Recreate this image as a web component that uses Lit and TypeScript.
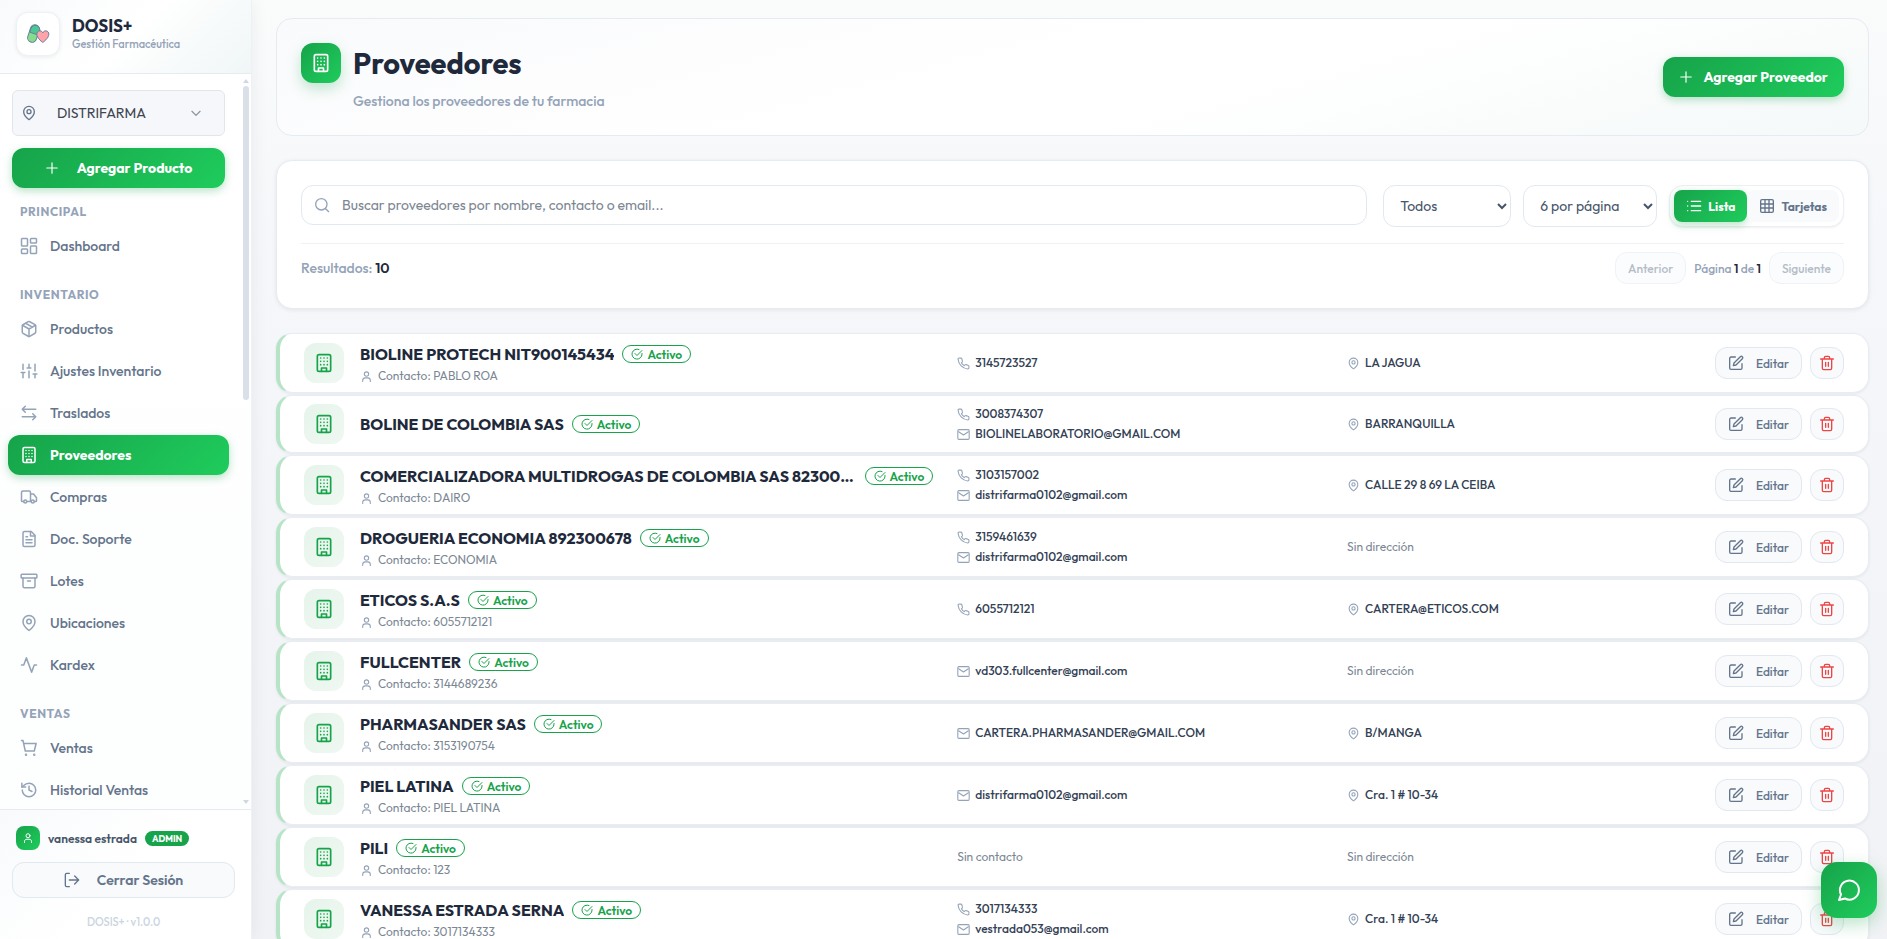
import { LitElement, html, css, svg } from "lit";
import { customElement, state } from "lit/decorators.js";
import { classMap } from "lit/directives/class-map.js";

const dots = (xs: number[], ys: number[]) =>
  xs.flatMap((x) => ys.map((y) => svg`<path d="M${x} ${y}h.01"/>`));

const ICONS: Record<string, any> = {
  pin: svg`<path d="M20 10c0 6-8 12-8 12s-8-6-8-12a8 8 0 0 1 16 0Z"/><circle cx="12" cy="10" r="3"/>`,
  chevron: svg`<path d="m5 9 7 7 7-7"/>`,
  plus: svg`<path d="M12 3v18M3 12h18"/>`,
  dashboard: svg`<rect x="2" y="2" width="8" height="10" rx="1"/><rect x="14" y="2" width="8" height="6" rx="1"/><rect x="14" y="12" width="8" height="10" rx="1"/><rect x="2" y="16" width="8" height="6" rx="1"/>`,
  box: svg`<path d="M21 16V8a2 2 0 0 0-1-1.7l-7-4a2 2 0 0 0-2 0l-7 4A2 2 0 0 0 3 8v8a2 2 0 0 0 1 1.7l7 4a2 2 0 0 0 2 0l7-4a2 2 0 0 0 1-1.7Z"/><path d="m3.3 7 8.7 5 8.7-5M12 22V12M7.5 4.3l9 5.1"/>`,
  sliders: svg`<path d="M4 21v-7M4 10V3M12 21v-9M12 8V3M20 21v-5M20 12V3M1.500 14h5M9.500 8h5M17.500 16h5"/>`,
  swap: svg`<path d="M21 7H3M7 3 3 7l4 4M3 17h18M17 13l4 4-4 4"/>`,
  building: svg`<rect x="4" y="2" width="16" height="20" rx="2"/><path d="M9 22v-4h6v4"/>${dots([8, 12, 16], [6, 10, 14])}`,
  truck: svg`<path d="M14 18V6a2 2 0 0 0-2-2H4a2 2 0 0 0-2 2v11a1 1 0 0 0 1 1h2M9 18h6M14 8h4l4 5v4a1 1 0 0 1-1 1h-2"/><circle cx="7" cy="18" r="2"/><circle cx="17" cy="18" r="2"/>`,
  doc: svg`<path d="M15 2H6a2 2 0 0 0-2 2v16a2 2 0 0 0 2 2h12a2 2 0 0 0 2-2V7l-5-5Z"/><path d="M14 2v6h6M8 9h2M8 13h8M8 17h8"/>`,
  archive: svg`<rect x="1.500" y="3" width="21" height="5" rx="1"/><path d="M4 8v11a2 2 0 0 0 2 2h12a2 2 0 0 0 2-2V8M10 12h4"/>`,
  activity: svg`<path d="M22 12h-3l-3.500 9.500L8.500 2.500 5 12H2"/>`,
  cart: svg`<circle cx="8" cy="21" r=".7"/><circle cx="19" cy="21" r=".7"/><path d="M2 2h2l3 14h12l2.500-10H5"/>`,
  history: svg`<path d="M3 12a9 9 0 1 0 9-9 10 10 0 0 0-7 3L2.500 8"/><path d="M2.500 3v5h5M12 7v5l4 2"/>`,
  user: svg`<circle cx="12" cy="7.500" r="4"/><path d="M5 21v-2c0-3 2-4.500 5-4.500h4c3 0 5 1.500 5 4.500v2"/>`,
  logout: svg`<path d="M8 22H4a2 2 0 0 1-2-2V4a2 2 0 0 1 2-2h4M8 12h14M16 6l6 6-6 6"/>`,
  search: svg`<circle cx="11" cy="11" r="8.500"/><path d="m17.500 17.500 4.500 4.500"/>`,
  list: svg`<path d="M8 5h14M8 12h14M8 19h14M2.500 5h.01M2.500 12h.01M2.500 19h.01"/>`,
  grid: svg`<rect x="2.500" y="2.500" width="19" height="19" rx="2"/><path d="M9 3v18M15 3v18M3 9h18M3 15h18"/>`,
  check: svg`<path d="M22 11v1a10 10 0 1 1-6-9"/><path d="m8 11 4 4L22 5"/>`,
  phone: svg`<path d="M22 17v3a2 2 0 0 1-2.200 2A19.800 19.800 0 0 1 2 4.200 2 2 0 0 1 4 2h3a2 2 0 0 1 2 1.700l1 3.600a2 2 0 0 1-.5 2.100L8.100 10.700a16 16 0 0 0 5.200 5.200l1.300-1.300a2 2 0 0 1 2.100-.5l3.600 1A2 2 0 0 1 22 17Z"/>`,
  mail: svg`<rect x="1.500" y="3" width="21" height="18" rx="2"/><path d="m3 7 9 6 9-6"/>`,
  edit: svg`<path d="M11 3H4.500a2 2 0 0 0-2 2v14.500a2 2 0 0 0 2 2H19a2 2 0 0 0 2-2V13"/><path d="M18.500 2.500a2.100 2.100 0 0 1 3 3L12 15l-4 1 1-4 9.500-9.500Z"/>`,
  trash: svg`<path d="M2.500 6h19M19 6v14a2 2 0 0 1-2 2H7a2 2 0 0 1-2-2V6M8 6V4a2 2 0 0 1 2-2h4a2 2 0 0 1 2 2v2M10 11v6M14 11v6"/>`,
  chat: svg`<path d="M8 20.500A9.500 9.500 0 1 0 4 16.500L2 22Z"/>`,
};

const icon = (name: string, cls = "") =>
  html`<svg class="icon ${cls}" viewBox="0 0 24 24" aria-hidden="true">${ICONS[name]}</svg>`;

const NAV = [
  { title: "Principal", items: [["dashboard", "Dashboard"]] },
  {
    title: "Inventario",
    items: [
      ["box", "Productos"],
      ["sliders", "Ajustes Inventario"],
      ["swap", "Traslados"],
      ["building", "Proveedores"],
      ["truck", "Compras"],
      ["doc", "Doc. Soporte"],
      ["archive", "Lotes"],
      ["pin", "Ubicaciones"],
      ["activity", "Kardex"],
    ],
  },
  { title: "Ventas", items: [["cart", "Ventas"], ["history", "Historial Ventas"]] },
];

interface Supplier {
  name: string;
  contact?: string;
  phone?: string;
  email?: string;
  address?: string;
}

const SUPPLIERS: Supplier[] = [
  { name: "BIOLINE PROTECH NIT900145434", contact: "PABLO ROA", phone: "3145723527", address: "LA JAGUA" },
  { name: "BOLINE DE COLOMBIA SAS", phone: "3008374307", email: "BIOLINELABORATORIO@GMAIL.COM", address: "BARRANQUILLA" },
  { name: "COMERCIALIZADORA MULTIDROGAS DE COLOMBIA SAS 823002800", contact: "DAIRO", phone: "3103157002", email: "distrifarma0102@gmail.com", address: "CALLE 29 8 69 LA CEIBA" },
  { name: "DROGUERIA ECONOMIA 892300678", contact: "ECONOMIA", phone: "3159461639", email: "distrifarma0102@gmail.com" },
  { name: "ETICOS S.A.S", contact: "6055712121", phone: "6055712121", address: "CARTERA@ETICOS.COM" },
  { name: "FULLCENTER", contact: "3144689236", email: "vd303.fullcenter@gmail.com" },
  { name: "PHARMASANDER SAS", contact: "3153190754", email: "CARTERA.PHARMASANDER@GMAIL.COM", address: "B/MANGA" },
  { name: "PIEL LATINA", contact: "PIEL LATINA", email: "distrifarma0102@gmail.com", address: "Cra. 1 # 10-34" },
  { name: "PILI", contact: "123" },
  { name: "VANESSA ESTRADA SERNA", contact: "3017134333", phone: "3017134333", email: "vestrada053@gmail.com", address: "Cra. 1 # 10-34" },
];

const shared = css`
  :host, * { box-sizing: border-box; }
  :host { font-family: Outfit, Lato, sans-serif; color: #1e293b; }
  button, input, select { font: inherit; color: inherit; margin: 0; }
  button { cursor: pointer; display: inline-flex; align-items: center; justify-content: center; border: 0; white-space: nowrap; }
  h1, h2, p, ul { margin: 0; padding: 0; }
  ul { list-style: none; }
  .icon {
    width: 16px; height: 16px; flex: none; fill: none; stroke: currentColor;
    stroke-width: 2; stroke-linecap: round; stroke-linejoin: round; overflow: visible;
  }
  .xs { width: 12px; height: 12px; }
  .sm { width: 13px; height: 13px; }
  .md { width: 14px; height: 14px; }
  .lg { width: 18px; height: 18px; }
  .xl { width: 20px; height: 20px; }
  .primary {
    background: linear-gradient(135deg, #16a34a, #1fcc5c);
    color: #fff;
    border-radius: 12px;
    font-weight: 700;
    box-shadow: 0 3px 8px rgba(22, 163, 74, 0.3);
  }
`;

@customElement("app-sidebar")
class AppSidebar extends LitElement {
  static styles = [
    shared,
    css`
      :host { display: flex; flex-direction: column; width: 252px; height: 100vh; flex: none; background: linear-gradient(#fff, #fdfefe); border-right: 1px solid #eef1f5; box-shadow: 2px 0 16px rgba(15, 23, 42, 0.05); position: relative; }
      .brand { display: flex; align-items: center; gap: 12px; padding: 12px 16px 17px; height: 74px; border-bottom: 1px solid #e6ebf1; background: linear-gradient(135deg, #f8fafc, #fff 50%, #f0f6f6); }
      .logo { width: 44px; height: 44px; border: 1px solid #eef2f6; border-radius: 12px; background: #fff; box-shadow: 0 1px 4px rgba(15, 23, 42, 0.08); display: grid; place-items: center; }
      .logo svg { width: 24px; height: 24px; }
      .brand-name { font-size: 17px; line-height: 20px; font-weight: 700; }
      .brand-sub { font-size: 11px; line-height: 16px; color: #94a3b8; font-weight: 500; }
      .body { display: flex; flex: 1; min-height: 0; overflow: hidden; }
      nav { flex: 1; min-width: 0; padding: 16px 8px 0; }
      .controls { display: flex; flex-direction: column; gap: 12px; padding: 0 4px; }
      .branch { display: flex; align-items: center; height: 46px; width: 100%; padding: 0 21px 0 8px; background: #f6f7fa; border: 1px solid #e2e6eb; border-radius: 6px; color: #3f4651; font-size: 14px; justify-content: flex-start; }
      .branch .pin { color: #64748b; }
      .branch span { flex: 1; text-align: left; padding-left: 20px; }
      .branch .chev { color: #8a929c; width: 14px; height: 14px; }
      .add { height: 40px; width: 100%; gap: 18px; font-size: 14px; }
      .title { font-size: 12px; line-height: 16px; font-weight: 700; color: #94a3b8; letter-spacing: 0.05em; text-transform: uppercase; margin: 21px 12px 6px; }
      .group:first-of-type .title { margin-top: 16px; }
      ul { display: flex; flex-direction: column; gap: 2px; }
      a { display: flex; align-items: center; gap: 12px; height: 40px; padding: 0 12px; color: #64748b; text-decoration: none; font-size: 14px; font-weight: 500; border-radius: 12px; }
      a .icon { color: #94a3b8; }
      a.primary { color: #fff; font-weight: 700; }
      a.primary .icon { color: #fff; }
      .track { width: 14px; display: flex; flex-direction: column; align-items: center; justify-content: space-between; padding: 5px 0 5px 4px; }
      .arrow { border: 3px solid transparent; }
      .up { border-top: 0; border-bottom: 4px solid #cfd8e2; }
      .down { border-bottom: 0; border-top: 4px solid #cfd8e2; }
      .rail { flex: 1; width: 6px; padding-top: 3px; }
      .thumb { height: 44%; border-radius: 3px; background: #d9e0e8; }
      footer { border-top: 1px solid #e6ebf1; padding: 16px 16px 0 12px; height: 130px; background: linear-gradient(135deg, #f8fafc, #fff 50%); }
      .user { display: flex; align-items: center; gap: 8px; padding-left: 4px; font-size: 12px; font-weight: 600; color: #475569; }
      .avatar { width: 24px; height: 24px; border-radius: 8px; background: linear-gradient(135deg, #16a34a, #1fcc5c); color: #fff; display: grid; place-items: center; }
      .badge { background: #16a34a; color: #fff; font-size: 9px; line-height: 15px; border-radius: 8px; padding: 0 7px; font-weight: 700; }
      .logout { margin-top: 12px; width: 100%; height: 36px; gap: 17px; background: #f8fafc; border: 1px solid #e2e8f0; border-radius: 12px; color: #64748b; font-size: 14px; font-weight: 600; }
      .version { text-align: center; font-size: 11px; line-height: 16px; margin-top: 16px; color: #cbd5e1; font-weight: 500; }
    `,
  ];

  render() {
    return html`
      <div class="brand">
        <div class="logo">
          <svg viewBox="0 0 24 24" aria-hidden="true">
            <g stroke="#64809a" stroke-width="1">
              <rect x="3" y="2.500" width="9" height="18" rx="4.500" transform="rotate(18 7.500 11.500)" fill="#86dc8c"/>
              <path d="M3.800 10.200 5 6.500a4.500 4.500 0 0 1 8.600 2.800l-1.200 3.700Z" fill="#4bc795"/>
              <path d="M16.800 20.500s-6-4.200-6-8.300c0-3.800 4.500-4.500 6-1.400 1.500-3.100 6-2.400 6 1.400 0 4.100-6 8.300-6 8.300Z" fill="#ffa3ab"/>
            </g>
          </svg>
        </div>
        <div>
          <div class="brand-name">DOSIS+</div>
          <div class="brand-sub">Gestión Farmacéutica</div>
        </div>
      </div>
      <div class="body">
        <nav>
          <div class="controls">
            <button class="branch">${icon("pin", "pin")}<span>DISTRIFARMA</span>${icon("chevron", "chev")}</button>
            <button class="primary add">${icon("plus", "md")}Agregar Producto</button>
          </div>
          ${NAV.map((g) => html`
            <section class="group">
              <h2 class="title">${g.title}</h2>
              <ul>
                ${g.items.map(([ic, label]) => html`
                  <li><a href="#" class=${classMap({ primary: label === "Proveedores" })}>${icon(ic, "lg")}${label}</a></li>
                `)}
              </ul>
            </section>
          `)}
        </nav>
        <div class="track" aria-hidden="true">
          <div class="arrow up"></div>
          <div class="rail"><div class="thumb"></div></div>
          <div class="arrow down"></div>
        </div>
      </div>
      <footer>
        <div class="user"><span class="avatar">${icon("user", "xs")}</span>vanessa estrada<span class="badge">ADMIN</span></div>
        <button class="logout">${icon("logout")}Cerrar Sesión</button>
        <p class="version">DOSIS+ · v1.0.0</p>
      </footer>
    `;
  }
}

@customElement("supplier-row")
class SupplierRow extends LitElement {
  static properties = { supplier: { attribute: false } };
  declare supplier: Supplier;

  static styles = [
    shared,
    css`
      :host { display: grid; grid-template-columns: minmax(0, 172fr) minmax(0, 100fr) minmax(0, 94fr) auto; column-gap: 24px; align-items: center; padding: 8px 24px; background: #fff; border: 1px solid #e8edf3; border-left: 4px solid #b7e4c7; border-radius: 16px; box-shadow: 0 1px 3px rgba(15, 23, 42, 0.07); }
      .info { display: flex; align-items: center; gap: 16px; }
      .tile { width: 40px; height: 40px; flex: none; border-radius: 12px; background: linear-gradient(135deg, #e6f4eb, #eff8f2); color: #16a34a; display: grid; place-items: center; }
      .text { min-width: 0; }
      .head { display: flex; align-items: center; gap: 8px; height: 24px; }
      .name { font-size: 16px; line-height: 24px; font-weight: 700; white-space: nowrap; overflow: hidden; text-overflow: ellipsis; }
      .status { display: flex; align-items: center; gap: 4px; flex: none; height: 18px; padding: 0 8px; border: 1px solid #16a34a; border-radius: 9px; color: #16a34a; font-size: 12px; font-weight: 600; }
      .line { display: flex; align-items: center; gap: 5px; font-size: 12px; line-height: 20px; font-weight: 500; color: #334155; }
      .line .icon { color: #94a3b8; }
      .contact { line-height: 16px; padding-top: 2px; color: #7b8794; font-weight: 400; }
      .empty { color: #7b8794; font-weight: 400; }
      .actions { display: flex; gap: 8px; }
      .actions button { height: 32px; border: 1px solid #e2e8f0; border-radius: 12px; background: #f8fafc; color: #64748b; font-size: 12px; font-weight: 500; }
      .actions .edit { width: 87px; gap: 12px; }
      .actions .del { width: 34px; color: #ef4444; }
    `,
  ];

  render() {
    const s = this.supplier;
    return html`
      <div class="info">
        <span class="tile">${icon("building", "xl")}</span>
        <div class="text">
          <div class="head">
            <span class="name">${s.name}</span>
            <span class="status">${icon("check", "xs")}Activo</span>
          </div>
          ${s.contact ? html`<div class="line contact">${icon("user", "sm")}Contacto: ${s.contact}</div>` : ""}
        </div>
      </div>
      <div>
        ${s.phone ? html`<div class="line">${icon("phone", "sm")}${s.phone}</div>` : ""}
        ${s.email ? html`<div class="line">${icon("mail", "sm")}${s.email}</div>` : ""}
        ${!s.phone && !s.email ? html`<div class="line empty">Sin contacto</div>` : ""}
      </div>
      ${s.address
        ? html`<div class="line">${icon("pin", "sm")}${s.address}</div>`
        : html`<div class="line empty">Sin dirección</div>`}
      <div class="actions">
        <button class="edit">${icon("edit")}Editar</button>
        <button class="del" aria-label="Eliminar">${icon("trash")}</button>
      </div>
    `;
  }
}

@customElement("app-root")
class AppRoot extends LitElement {
  @state() view = "lista";

  static styles = [
    shared,
    css`
      :host { display: flex; height: 100vh; overflow: hidden; background: linear-gradient(#fafbfb, #f6f7fa 25%, #f1f2f5); }
      main { flex: 1; min-width: 0; padding: 18px 18px 0 24px; display: flex; flex-direction: column; gap: 24px; overflow: hidden; }
      .card { flex: none; background: #fff; border: 1px solid #e6ebf2; border-radius: 16px; padding: 24px; }
      .hero { display: flex; align-items: center; justify-content: space-between; background: linear-gradient(165deg, #f9fafc, #fff 45%, #fff 60%, #f5f9f9); }
      .heading { display: flex; align-items: flex-start; gap: 12px; }
      .badge { width: 40px; height: 40px; display: grid; place-items: center; box-shadow: 0 6px 14px rgba(22, 163, 74, 0.25); }
      h1 { font-size: 29px; line-height: 42px; font-weight: 700; }
      .sub { font-size: 14px; line-height: 20px; margin-top: 6px; color: #94a3b8; font-weight: 500; }
      .new { height: 40px; padding: 0 16px; gap: 10px; font-size: 14px; }
      .filters { box-shadow: 0 1px 4px rgba(15, 23, 42, 0.08); }
      .bar { display: flex; align-items: flex-start; gap: 12px; padding-bottom: 16px; border-bottom: 1px solid #eff2f5; }
      .search { flex: 1; display: flex; align-items: center; gap: 12px; height: 40px; padding: 0 12px; margin-right: 4px; border: 1px solid #e2e8f0; border-radius: 12px; color: #94a3b8; }
      .search input { flex: 1; border: 0; outline: 0; background: none; padding: 0; font-size: 14px; color: #475569; }
      .search input::placeholder { color: #7d8793; }
      select { height: 42px; border: 1px solid #e2e8f0; border-radius: 12px; background: #fff; color: #475569; font-size: 14px; padding: 0 0 0 12px; }
      .state { width: 128px; }
      .size { width: 134px; }
      .toggle { display: flex; padding: 4px; height: 42px; border: 1px solid #eceff4; border-radius: 14px; background: #fff; box-shadow: 0 1px 2px rgba(15, 23, 42, 0.06); }
      .toggle button { height: 32px; gap: 6px; padding: 0 12px; border-radius: 8px; background: #f8fafc; color: #64748b; font-size: 12px; font-weight: 700; }
      .toggle .primary { background: linear-gradient(135deg, #16a34a, #1fcc5c); color: #fff; }
      .foot { display: flex; align-items: center; justify-content: space-between; padding-top: 8px; font-size: 14px; color: #94a3b8; font-weight: 500; }
      .foot b { color: #1e293b; font-weight: 600; }
      .pager { display: flex; align-items: center; gap: 8px; font-size: 12px; }
      .pager button { height: 32px; padding: 0 12px; border: 1px solid #eff2f6; border-radius: 12px; background: #fbfcfd; color: #b4bcc8; font-size: 12px; font-weight: 500; }
      .rows { display: flex; flex-direction: column; gap: 2px; }
      .chat { position: fixed; right: 10px; bottom: 21px; width: 56px; height: 56px; border-radius: 16px; box-shadow: 0 6px 18px rgba(22, 163, 74, 0.3); }
      .chat .icon { width: 24px; height: 24px; }
    `,
  ];

  render() {
    return html`
      <app-sidebar></app-sidebar>
      <main>
        <header class="card hero">
          <div class="heading">
            <span class="primary badge">${icon("building", "xl")}</span>
            <div>
              <h1>Proveedores</h1>
              <p class="sub">Gestiona los proveedores de tu farmacia</p>
            </div>
          </div>
          <button class="primary new">${icon("plus", "md")}Agregar Proveedor</button>
        </header>
        <section class="card filters">
          <div class="bar">
            <label class="search">${icon("search")}<input type="search" aria-label="Buscar" placeholder="Buscar proveedores por nombre, contacto o email..." /></label>
            <select class="state" aria-label="Estado"><option>Todos</option></select>
            <select class="size" aria-label="Por página"><option>6 por página</option></select>
            <div class="toggle">
              <button class=${classMap({ primary: this.view === "lista" })} @click=${() => (this.view = "lista")}>${icon("list")}Lista</button>
              <button class=${classMap({ primary: this.view === "tarjetas" })} @click=${() => (this.view = "tarjetas")}>${icon("grid")}Tarjetas</button>
            </div>
          </div>
          <div class="foot">
            <span>Resultados: <b>10</b></span>
            <div class="pager">
              <button disabled>Anterior</button>
              <span>Página <b>1</b> de <b>1</b></span>
              <button disabled>Siguiente</button>
            </div>
          </div>
        </section>
        <section class="rows">
          ${SUPPLIERS.map((s) => html`<supplier-row .supplier=${s}></supplier-row>`)}
        </section>
      </main>
      <button class="primary chat" aria-label="Chat">${icon("chat")}</button>
    `;
  }
}
